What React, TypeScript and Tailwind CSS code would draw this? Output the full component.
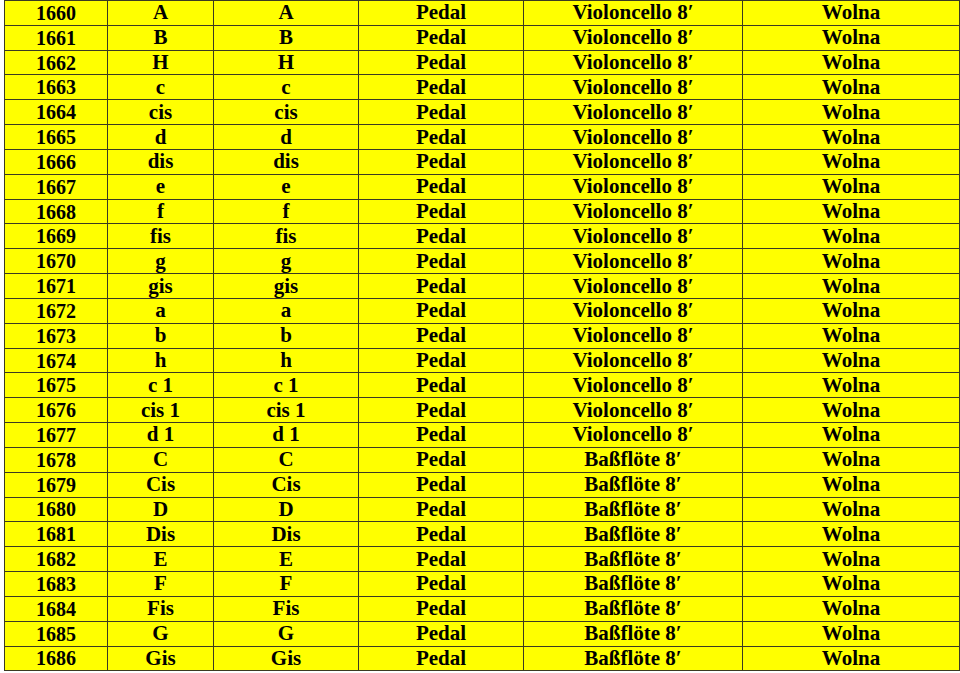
const rows: [number, string, string][] = [
  [1660, 'A', 'Violoncello 8′'],
  [1661, 'B', 'Violoncello 8′'],
  [1662, 'H', 'Violoncello 8′'],
  [1663, 'c', 'Violoncello 8′'],
  [1664, 'cis', 'Violoncello 8′'],
  [1665, 'd', 'Violoncello 8′'],
  [1666, 'dis', 'Violoncello 8′'],
  [1667, 'e', 'Violoncello 8′'],
  [1668, 'f', 'Violoncello 8′'],
  [1669, 'fis', 'Violoncello 8′'],
  [1670, 'g', 'Violoncello 8′'],
  [1671, 'gis', 'Violoncello 8′'],
  [1672, 'a', 'Violoncello 8′'],
  [1673, 'b', 'Violoncello 8′'],
  [1674, 'h', 'Violoncello 8′'],
  [1675, 'c 1', 'Violoncello 8′'],
  [1676, 'cis 1', 'Violoncello 8′'],
  [1677, 'd 1', 'Violoncello 8′'],
  [1678, 'C', 'Baßflöte 8′'],
  [1679, 'Cis', 'Baßflöte 8′'],
  [1680, 'D', 'Baßflöte 8′'],
  [1681, 'Dis', 'Baßflöte 8′'],
  [1682, 'E', 'Baßflöte 8′'],
  [1683, 'F', 'Baßflöte 8′'],
  [1684, 'Fis', 'Baßflöte 8′'],
  [1685, 'G', 'Baßflöte 8′'],
  [1686, 'Gis', 'Baßflöte 8′'],
];

const cell = 'border border-[#3b3a22] p-0 h-[24.83px] text-center align-middle';

export default function App() {
  return (
    <div className="bg-white w-[960px] h-[673px] overflow-hidden pl-[4px] font-['Liberation_Serif','Times_New_Roman',serif] font-bold text-[21px] leading-none text-black">
      <table className="table-fixed border-collapse w-[955px] bg-[#ffff00]">
        <colgroup>
          <col className="w-[103px]" />
          <col className="w-[106px]" />
          <col className="w-[145px]" />
          <col className="w-[165px]" />
          <col className="w-[219px]" />
          <col className="w-[217px]" />
        </colgroup>
        <tbody>
          {rows.map(([num, note, stop]) => (
            <tr key={num}>
              <td className={`${cell} text-[20px]`}>{num}</td>
              <td className={cell}>{note}</td>
              <td className={cell}>{note}</td>
              <td className={cell}>Pedal</td>
              <td className={cell}>{stop}</td>
              <td className={cell}>Wolna</td>
            </tr>
          ))}
        </tbody>
      </table>
    </div>
  );
}
